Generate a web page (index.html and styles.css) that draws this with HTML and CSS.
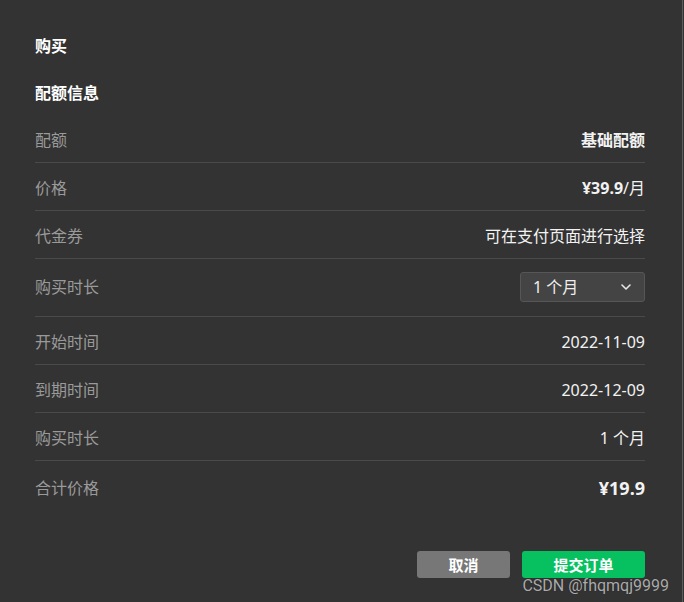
FILE: index.html
```html
<!DOCTYPE html>
<html lang="zh-CN">
<head>
  <meta charset="UTF-8" />
  <meta name="viewport" content="width=device-width, initial-scale=1.0"/>
  <title>购买</title>
  <link rel="stylesheet" href="styles.css">
</head>
<body>
  <div class="dialog">
    <div class="title">购买</div>
    <div class="section">配额信息</div>

    <div class="rows">
      <div class="row">
        <span class="label">配额</span>
        <span class="value strong">基础配额</span>
      </div>
      <div class="row">
        <span class="label">价格</span>
        <span class="value"><b>¥39.9</b>/月</span>
      </div>
      <div class="row">
        <span class="label">代金券</span>
        <span class="value">可在支付页面进行选择</span>
      </div>
      <div class="row row-select">
        <span class="label">购买时长</span>
        <div class="select">
          <span>1 个月</span>
          <svg width="10" height="6" viewBox="0 0 10 6"><path d="M1 1l4 4 4-4" fill="none" stroke="#e6e6e6" stroke-width="1.6" stroke-linecap="round" stroke-linejoin="round"/></svg>
        </div>
      </div>
      <div class="row">
        <span class="label">开始时间</span>
        <span class="value">2022-11-09</span>
      </div>
      <div class="row">
        <span class="label">到期时间</span>
        <span class="value">2022-12-09</span>
      </div>
      <div class="row">
        <span class="label">购买时长</span>
        <span class="value">1 个月</span>
      </div>
      <div class="row row-total">
        <span class="label">合计价格</span>
        <span class="total">¥19.9</span>
      </div>
    </div>

    <div class="actions">
      <button class="btn btn-cancel">取消</button>
      <button class="btn btn-submit">提交订单</button>
    </div>
  </div>

  <div class="watermark">CSDN @fhqmqj9999</div>
</body>
</html>
```

FILE: styles.css
```css
html, body {
  height: 100%;
}

body {
  margin: 0;
  background: #333333;
  color: #ffffff;
  font-family: "Noto Sans", "Noto Sans CJK SC", sans-serif;
  font-size: 16px;
  overflow: hidden;
}

.dialog {
  box-sizing: border-box;
  height: 100%;
  padding: 35px 37px 0 35px;
  border-right: 1px solid #5c5c5c;
  width: 683px;
}

.title,
.section {
  line-height: 22px;
  font-weight: bold;
}

.section {
  margin-top: 25px;
  margin-bottom: 11px;
}

.row {
  display: flex;
  justify-content: space-between;
  align-items: center;
  padding: 14px 0 11px;
  line-height: 22px;
  border-bottom: 1px solid #4a4a4a;
}

.row-select {
  padding: 13px 0 14px;
}

.row-total {
  border-bottom: none;
  padding: 13px 0 0;
  line-height: 28px;
}

.label {
  color: #9a9a9a;
}

.value {
  color: #f2f2f2;
}

.value b,
.strong {
  font-weight: bold;
}

.total {
  font-size: 18px;
  font-weight: bold;
  color: #f2f2f2;
}

.select {
  box-sizing: border-box;
  width: 125px;
  height: 30px;
  display: flex;
  align-items: center;
  justify-content: space-between;
  padding: 0 13px 0 12px;
  background: #444444;
  border: 1px solid #565656;
  border-radius: 3px;
  color: #eeeeee;
}

.actions {
  display: flex;
  justify-content: flex-end;
  gap: 12px;
  margin-top: 49px;
}

.btn {
  height: 27px;
  border: none;
  border-radius: 3px;
  color: #ffffff;
  font-family: inherit;
  font-size: 15px;
  font-weight: bold;
  padding: 0;
  cursor: pointer;
}

.btn-cancel {
  width: 93px;
  background: #777777;
}

.btn-submit {
  width: 123px;
  background: #07c160;
}

.watermark {
  position: absolute;
  right: 15px;
  bottom: 7px;
  font-family: Roboto, "Noto Sans", sans-serif;
  font-size: 16px;
  color: rgba(220, 220, 220, 0.75);
  text-shadow: 0 0 1px rgba(0, 0, 0, 0.5);
}
```
